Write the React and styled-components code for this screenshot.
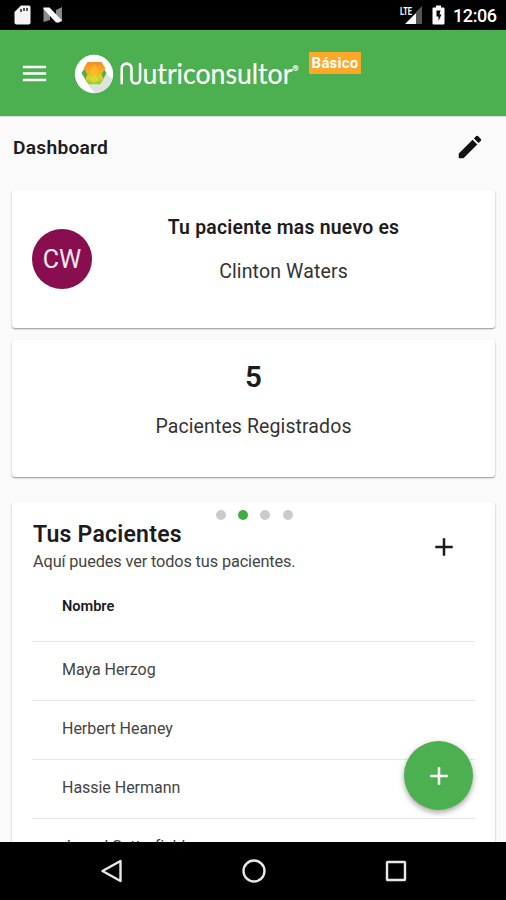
import React from "react";
import styled, { createGlobalStyle } from "styled-components";
import { MdAdd, MdEdit, MdMenu } from "react-icons/md";

const patients = ["Maya Herzog", "Herbert Heaney", "Hassie Hermann", "Jarrod Satterfield"];

const GlobalStyle = createGlobalStyle`
	* {
		box-sizing: border-box;
	}
	body {
		margin: 0;
		font-family: Roboto, "Liberation Sans", sans-serif;
		color: #1c1c1c;
	}
	h1, h2, h3, p {
		margin: 0;
	}
	svg {
		display: block;
	}
`;

const Screen = styled.div`
	position: relative;
	display: flex;
	flex-direction: column;
	width: 506px;
	height: 900px;
	overflow: hidden;
	background: #fafafa;
`;

const StatusBar = styled.div`
	display: flex;
	justify-content: space-between;
	flex: none;
	height: 30px;
	padding: 0 9px 0 14px;
	background: #000;
	color: #fff;
`;

const StatusGroup = styled.div`
	display: flex;
	align-items: center;
	gap: ${(props) => props.$gap}px;
`;

const Clock = styled.span`
	font-size: 18px;
	font-weight: 500;
	line-height: 30px;
	padding-top: 2px;
	width: 44px;
	white-space: nowrap;
	letter-spacing: -0.4px;
`;

const AppBar = styled.header`
	display: flex;
	align-items: center;
	flex: none;
	height: 86px;
	padding-left: 19px;
	background: #4caf50;
	color: #fff;
	box-shadow: 0 1px 1px rgba(0, 0, 0, 0.12);
`;

const Brand = styled.div`
	margin: 1px 0 0 24px;
`;

const Wordmark = styled.svg`
	overflow: visible;
`;

const Badge = styled.span`
	align-self: flex-start;
	width: 52px;
	height: 22px;
	margin: 22px 0 0 9px;
	background: #ffa726;
	font-size: 15px;
	font-weight: 700;
	line-height: 23px;
	letter-spacing: 0.2px;
	text-align: center;
`;

const Content = styled.main`
	flex: 1;
	min-height: 0;
	overflow: hidden;
	padding: 0 11px 0 12px;
`;

const PageHeader = styled.div`
	display: flex;
	align-items: center;
	justify-content: space-between;
	height: 62px;
	margin-bottom: 12px;
	padding-right: 10px;
`;

const PageTitle = styled.h1`
	padding: 1px 0 0 1px;
	font-size: 19.2px;
	font-weight: 600;
	letter-spacing: 0.25px;
`;

const Card = styled.section`
	height: 138px;
	margin-bottom: 12px;
	border-radius: 3px;
	background: #fff;
	box-shadow: 0 1px 2px rgba(0, 0, 0, 0.32), 0 1px 1px rgba(0, 0, 0, 0.12);
`;

const NewestCard = styled(Card)`
	display: flex;
	align-items: center;
	padding-left: 20px;
`;

const Avatar = styled.div`
	flex: none;
	width: 60px;
	height: 60px;
	border-radius: 50%;
	background: #880e4f;
	color: #f6e8ef;
	font-size: 25px;
	line-height: 61px;
	text-align: center;
`;

const Newest = styled.div`
	align-self: flex-start;
	width: 383px;
	padding-top: 26px;
	text-align: center;
`;

const CardTitle = styled.h2`
	font-size: 19.4px;
	font-weight: 600;
	line-height: 24px;
	letter-spacing: 0.23px;
`;

const CardText = styled.p`
	margin-top: 20px;
	color: #333;
	font-size: 19.5px;
	line-height: 24px;
	letter-spacing: 0.13px;
`;

const CountCard = styled(Card)`
	height: 137px;
	padding-top: 18px;
	text-align: center;
`;

const Count = styled.h2`
	font-size: 29.5px;
	font-weight: 600;
	line-height: 38px;
`;

const CountText = styled(CardText)`
	margin-top: 19px;
	letter-spacing: 0.1px;
`;

const ListCard = styled(Card)`
	position: relative;
	height: 400px;
	margin: 25px 0 0;
	padding: 18px 20px 0;
`;

const Dots = styled.div`
	position: absolute;
	top: 8px;
	left: 204px;
	display: flex;
	gap: 12.2px;
`;

const Dot = styled.span`
	width: 10px;
	height: 10px;
	border-radius: 50%;
	background: ${(props) => (props.$active ? "#41ad49" : "#cbcbcb")};
`;

const ListHeader = styled.div`
	display: flex;
	justify-content: space-between;
	height: 57px;
	padding: 0 16px 0 1px;
`;

const ListTitle = styled.h2`
	font-size: 23px;
	font-weight: 600;
	line-height: 29px;
	letter-spacing: 0.24px;
`;

const ListSubtitle = styled.p`
	color: #444;
	font-size: 16.3px;
	line-height: 25px;
	letter-spacing: -0.12px;
`;

const AddIcon = styled(MdAdd)`
	margin-top: 12px;
`;

const Row = styled.div`
	height: 59px;
	padding: 0 30px;
	border-bottom: 1.5px solid #e6e6e6;
	color: #444;
	font-size: 16px;
	line-height: 56px;
	letter-spacing: -0.03px;
`;

const HeadRow = styled(Row)`
	height: 65px;
	color: #1c1c1c;
	font-size: 14.6px;
	font-weight: 600;
	line-height: 59px;
`;

const Fab = styled.button`
	position: absolute;
	left: 404px;
	top: 741px;
	display: grid;
	place-items: center;
	width: 69px;
	height: 69px;
	padding: 0;
	border: 0;
	border-radius: 50%;
	background: #4caf50;
	color: #fff;
	box-shadow: 0 3px 5px rgba(0, 0, 0, 0.25), 0 1px 8px rgba(0, 0, 0, 0.12);
`;

const NavBar = styled.nav`
	position: relative;
	display: flex;
	justify-content: space-between;
	align-items: center;
	flex: none;
	height: 58px;
	padding: 0 98px 0 99px;
	background: #000;
`;

const Logo = () => (
	<Wordmark width="226" height="42" viewBox="0 0 226 42">
		<defs>
			<linearGradient id="fruit" x1="0" y1="0" x2="0" y2="1">
				<stop offset="0" stopColor="#f58a2c" />
				<stop offset="0.45" stopColor="#fbb021" />
				<stop offset="0.7" stopColor="#d3d62c" />
				<stop offset="1" stopColor="#8fc63d" />
			</linearGradient>
			<clipPath id="disc">
				<circle cx="20" cy="21" r="19.2" />
			</clipPath>
		</defs>
		<circle cx="20" cy="21" r="19.2" fill="#fff" />
		<path d="M32 20l8 8v14H22L14 32h13z" fill="#dfe3e0" clipPath="url(#disc)" />
		<path d="M11 14.500L7.500 20l5.500 9.500h14.500L32.500 20 29 14.500z" fill="#55ae48" />
		<path d="M13.500 9h14l4 6.500-4 5.500 2 5-3 5.500h-12l-3-5.500 2-5-4-5.500z" fill="url(#fruit)" />
		<path d="M20.300 11l4.500 7-4.500 7-4.500-7z" fill="#ffc52b" opacity="0.5" />
		<path d="M20.300 22.500l5 4.500-5 4-5-4z" fill="#e5e436" opacity="0.5" />
		{/* the N of the wordmark is a single rounded stroke */}
		<path
			d="M47.700 30.200V15.500a4.900 4.900 0 0 1 9.800 0v10.700a4.300 4.300 0 0 0 8.600 0V11"
			fill="none"
			stroke="#fff"
			strokeWidth="2.600"
			strokeLinecap="round"
		/>
		<text
			x="68.500"
			y="31.300"
			fill="#fff"
			stroke="#fff"
			strokeWidth="0.200"
			fontFamily="Lato, sans-serif"
			fontSize="29"
			textLength="156"
			lengthAdjust="spacingAndGlyphs"
		>
			utriconsultor
			<tspan dy="-13.500" fontSize="8">®</tspan>
		</text>
	</Wordmark>
);

const SdIcon = () => (
	<svg width="17" height="20" viewBox="0 0 17 20">
		<path d="M7 0.500h8a1.500 1.500 0 0 1 1.500 1.500v15.500a2 2 0 0 1-2 2h-12a2 2 0 0 1-2-2V7z" fill="#f4f4f4" />
		<path d="M6 4h2v3H6zM9 3h2v3H9zM12 3h2v3h-2z" fill="#555" />
	</svg>
);

const NIcon = () => (
	<svg width="20" height="16" viewBox="0 0 20 16">
		<path d="M0.500 0.500L7 6v7l-6.500 2zM19 0v15l-6-5V3z" fill="#8b8b8b" />
		<path d="M0.500 0.500h6L19 13.500 16 15.500h-3L0.500 2z" fill="#fff" />
	</svg>
);

const SignalIcon = () => (
	<svg width="23" height="20" viewBox="0 0 23 20">
		<path d="M22 1v18h-6V7z" fill="#555" />
		<path d="M5 19L16 8v11z" fill="#fff" />
		<text
			x="0"
			y="9.500"
			fill="#fff"
			fontFamily="Roboto, sans-serif"
			fontSize="11"
			fontWeight="700"
			textLength="12"
			lengthAdjust="spacingAndGlyphs"
		>
			LTE
		</text>
	</svg>
);

const BatteryIcon = () => (
	<svg width="13" height="20" viewBox="0 0 13 20">
		<path d="M4 0.500h5v2h2.500a1 1 0 0 1 1 1v15a1 1 0 0 1-1 1h-10a1 1 0 0 1-1-1v-15a1 1 0 0 1 1-1H4z" fill="#fff" />
		<path d="M8.500 5.500H4.500v6h2v4.500l3-6.500h-2z" fill="#000" />
	</svg>
);

export default () => {
	return (
		<Screen>
			<GlobalStyle />
			<StatusBar>
				<StatusGroup $gap={12}>
					<SdIcon />
					<NIcon />
				</StatusGroup>
				<StatusGroup $gap={8.5}>
					<SignalIcon />
					<BatteryIcon />
					<Clock>12:06</Clock>
				</StatusGroup>
			</StatusBar>
			<AppBar>
				<MdMenu size={31} />
				<Brand>
					<Logo />
				</Brand>
				<Badge>Básico</Badge>
			</AppBar>
			<Content>
				<PageHeader>
					<PageTitle>Dashboard</PageTitle>
					<MdEdit size={30} color="#111" />
				</PageHeader>
				<NewestCard>
					<Avatar>CW</Avatar>
					<Newest>
						<CardTitle>Tu paciente mas nuevo es</CardTitle>
						<CardText>Clinton Waters</CardText>
					</Newest>
				</NewestCard>
				<CountCard>
					<Count>5</Count>
					<CountText>Pacientes Registrados</CountText>
				</CountCard>
				<ListCard>
					<Dots>
						{[0, 1, 2, 3].map((dot) => (
							<Dot key={dot} $active={dot === 1} />
						))}
					</Dots>
					<ListHeader>
						<div>
							<ListTitle>Tus Pacientes</ListTitle>
							<ListSubtitle>Aquí puedes ver todos tus pacientes.</ListSubtitle>
						</div>
						<AddIcon size={30} />
					</ListHeader>
					<HeadRow>Nombre</HeadRow>
					{patients.map((name) => (
						<Row key={name}>{name}</Row>
					))}
				</ListCard>
			</Content>
			<Fab aria-label="Agregar">
				<MdAdd size={30} />
			</Fab>
			<NavBar>
				<svg width="25" height="26" viewBox="0 0 25 26">
					<path d="M21.500 3v20L3.500 13z" fill="none" stroke="#e8e8e8" strokeWidth="2.400" strokeLinejoin="round" />
				</svg>
				<svg width="26" height="26" viewBox="0 0 26 26">
					<circle cx="13" cy="13" r="10.500" fill="none" stroke="#e8e8e8" strokeWidth="2.400" />
				</svg>
				<svg width="24" height="24" viewBox="0 0 24 24">
					<rect x="3" y="3" width="18" height="18" rx="0.500" fill="none" stroke="#e8e8e8" strokeWidth="2.400" />
				</svg>
			</NavBar>
		</Screen>
	);
};
